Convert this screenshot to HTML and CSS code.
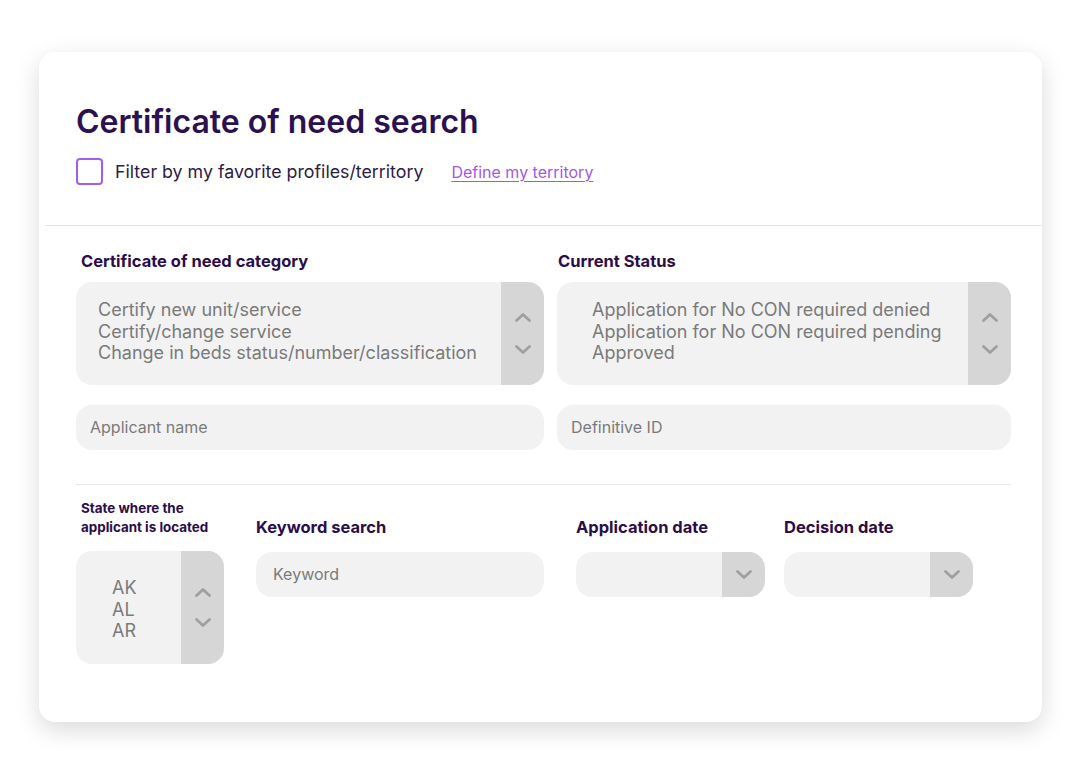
FILE: index.html
```html
<!DOCTYPE html>
<html lang="en">
<head>
<meta charset="utf-8">
<title>Certificate of need search</title>
<link rel="stylesheet" href="styles.css">
</head>
<body>
<div class="card">
  <header class="head">
    <h1 class="title">Certificate of need search</h1>
    <div class="filter">
      <span class="checkbox"></span>
      <span class="filter-text">Filter by my favorite profiles/territory</span>
      <a class="link" href="#">Define my territory</a>
    </div>
  </header>
  <div class="divider-full"></div>
  <section class="content">
    <div class="grid-top">
      <div class="field">
        <div class="label">Certificate of need category</div>
        <div class="listbox">
          <div class="options">
            <div>Certify new unit/service</div>
            <div>Certify/change service</div>
            <div>Change in beds status/number/classification</div>
          </div>
          <div class="scroll">
            <svg class="chev" viewBox="0 0 16 9"><polyline points="1.5,7.5 8,1.5 14.5,7.5"/></svg>
            <svg class="chev" viewBox="0 0 16 9"><polyline points="1.5,1.5 8,7.5 14.5,1.5"/></svg>
          </div>
        </div>
      </div>
      <div class="field second">
        <div class="label">Current Status</div>
        <div class="listbox status">
          <div class="options">
            <div>Application for No CON required denied</div>
            <div>Application for No CON required pending</div>
            <div>Approved</div>
          </div>
          <div class="scroll">
            <svg class="chev" viewBox="0 0 16 9"><polyline points="1.5,7.5 8,1.5 14.5,7.5"/></svg>
            <svg class="chev" viewBox="0 0 16 9"><polyline points="1.5,1.5 8,7.5 14.5,1.5"/></svg>
          </div>
        </div>
      </div>
      <div class="input">Applicant name</div>
      <div class="input">Definitive ID</div>
    </div>
    <div class="divider"></div>
    <div class="grid-bottom">
      <div class="label small">State where the<br>applicant is located</div>
      <div class="label">Keyword search</div>
      <div class="label">Application date</div>
      <div class="label last">Decision date</div>
      <div class="listbox state">
        <div class="options">
          <div>AK</div>
          <div>AL</div>
          <div>AR</div>
        </div>
        <div class="scroll">
          <svg class="chev" viewBox="0 0 16 9"><polyline points="1.5,7.5 8,1.5 14.5,7.5"/></svg>
          <svg class="chev" viewBox="0 0 16 9"><polyline points="1.5,1.5 8,7.5 14.5,1.5"/></svg>
        </div>
      </div>
      <div class="input keyword">Keyword</div>
      <div class="dropdown">
        <div class="drop-value"></div>
        <div class="drop-btn"><svg class="chev" viewBox="0 0 16 9"><polyline points="1.5,1.5 8,7.5 14.5,1.5"/></svg></div>
      </div>
      <div class="dropdown last">
        <div class="drop-value"></div>
        <div class="drop-btn"><svg class="chev" viewBox="0 0 16 9"><polyline points="1.5,1.5 8,7.5 14.5,1.5"/></svg></div>
      </div>
    </div>
  </section>
</div>
</body>
</html>
```

FILE: styles.css
```css
* { box-sizing: border-box; }
html, body { margin: 0; padding: 0; background: #ffffff; }
body {
  font-family: Inter, "Noto Sans", sans-serif;
  padding-top: 52px;
  padding-left: 39px;
  min-height: 774px;
}
.card {
  width: 1003px;
  height: 670px;
  background: #ffffff;
  border-radius: 16px;
  box-shadow: 0 8px 24px rgba(0, 0, 0, 0.15);
  padding-top: 50px;
}
.head { padding: 0 31px 0 37px; }
.title {
  margin: 0;
  font-size: 32px;
  line-height: 40px;
  font-weight: 600;
  color: #2b1150;
}
.filter {
  margin-top: 16px;
  height: 27px;
  display: flex;
  align-items: center;
}
.checkbox {
  width: 27px;
  height: 27px;
  border: 2.5px solid #a45de9;
  border-radius: 4px;
  flex: none;
}
.filter-text {
  margin-left: 12px;
  font-size: 17.8px;
  color: #2e1a47;
}
.link {
  margin-left: 28px;
  font-size: 16px;
  color: #a357e6;
  text-decoration: underline;
  text-underline-offset: 3px;
  text-decoration-thickness: 1px;
}
.divider-full {
  margin: 40px 0 0 6px;
  height: 1px;
  background: #e6e6e6;
}
.content { padding: 25px 31px 0 37px; }
.grid-top {
  display: grid;
  grid-template-columns: 468px 454px;
  column-gap: 13px;
  row-gap: 20px;
}
.field { display: flex; flex-direction: column; }
.label {
  font-size: 16.5px;
  line-height: 20px;
  font-weight: 700;
  color: #2a0d4a;
  padding-left: 5px;
}
.field .label { margin-bottom: 11px; }
.field.second .label { padding-left: 1px; }
.listbox {
  display: flex;
  height: 103px;
  border-radius: 16px;
  overflow: hidden;
  background: #f2f2f2;
}
.options {
  flex: 1;
  padding: 17px 0 0 22px;
  font-size: 18px;
  line-height: 21.5px;
  color: #7a7a7a;
}
.status .options { padding-left: 35px; }
.scroll {
  width: 43px;
  flex: none;
  background: #d6d6d6;
  display: flex;
  flex-direction: column;
  align-items: center;
  justify-content: center;
  gap: 23px;
}
.chev {
  width: 16px;
  height: 9px;
  fill: none;
  stroke: #9f9f9f;
  stroke-width: 2.7;
  stroke-linecap: round;
  stroke-linejoin: round;
  display: block;
}
.input {
  height: 45px;
  border-radius: 16px;
  background: #f2f2f2;
  padding-left: 14px;
  font-size: 16px;
  line-height: 45px;
  color: #7a7a7a;
}
.divider {
  margin-top: 34px;
  height: 1px;
  background: #e6e6e6;
}
.grid-bottom {
  margin-top: 14px;
  display: grid;
  grid-template-columns: 148px 288px 189px 176px;
  column-gap: 32px;
  row-gap: 14px;
}
.grid-bottom .label {
  align-self: end;
  padding-left: 0;
}
.grid-bottom .last { margin-left: -13px; }
.grid-bottom .label.small {
  padding-left: 5px;
  font-size: 13.4px;
  line-height: 19px;
}
.listbox.state {
  height: 113px;
}
.state .options {
  padding: 26px 0 0 36px;
}
.state .scroll { gap: 21px; }
.input.keyword {
  margin-top: 1px;
  padding-left: 17px;
}
.dropdown {
  margin-top: 1px;
  height: 45px;
  border-radius: 16px;
  overflow: hidden;
  display: flex;
  background: #f2f2f2;
}
.drop-value { flex: 1; }
.drop-btn {
  width: 43px;
  background: #d6d6d6;
  display: flex;
  align-items: center;
  justify-content: center;
}
```
